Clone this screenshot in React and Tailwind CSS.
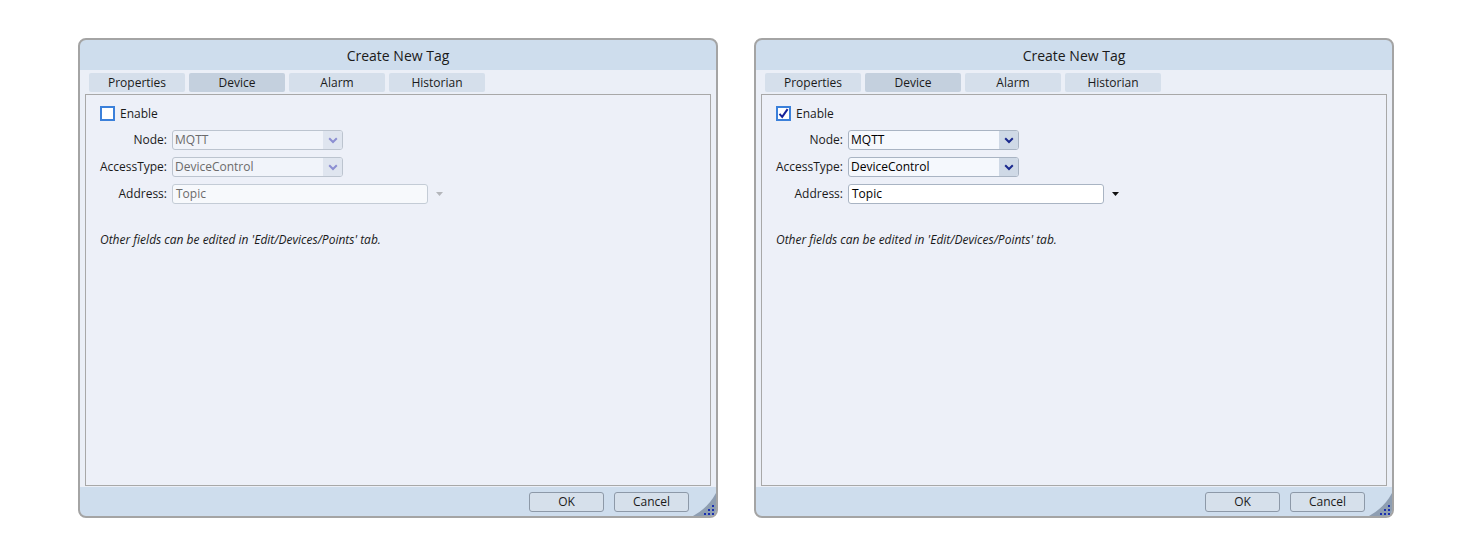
import React from "react";

const FONT = { fontFamily: '"Segoe UI", "Open Sans", "Noto Sans", sans-serif' };

function Chevron({ enabled }) {
  return (
    <svg width="10" height="7" viewBox="0 0 10 7">
      <path
        d="M1.2 1.3 L5 5 L8.8 1.3"
        fill="none"
        stroke={enabled ? "#1b2a8e" : "#8c8fd2"}
        strokeWidth="2"
      />
    </svg>
  );
}

function Select({ value, enabled }) {
  return (
    <div
      className={`flex h-[20px] w-[171px] items-stretch rounded-[3px] border ${
        enabled ? "border-[#a9b4c3] bg-[#f5f8fd] text-black" : "border-[#bcc4cf] bg-[#f1f4fa] text-[#6b6b6b]"
      }`}
    >
      <div className="flex flex-1 items-center pl-[2px] text-[12px] leading-none">{value}</div>
      <div
        className={`flex w-[19px] items-center justify-center rounded-r-[2px] ${
          enabled ? "bg-[#cfd9e6]" : "bg-[#dfe5ef]"
        }`}
      >
        <Chevron enabled={enabled} />
      </div>
    </div>
  );
}

function Row({ label, children }) {
  return (
    <div className="flex h-[20px] items-center">
      <div className="w-[86px] pr-[5px] text-right text-[12px] leading-none text-[#1a1a1a]">{label}</div>
      {children}
    </div>
  );
}

function Checkbox({ checked }) {
  return (
    <div className="flex h-[15px] w-[15px] items-center justify-center border-2 border-[#3b80da] bg-white">
      {checked && (
        <svg width="11" height="11" viewBox="0 0 11 11">
          <path d="M1.5 5.8 L4.2 8.8 L9.6 1.2" fill="none" stroke="#17239a" strokeWidth="2" />
        </svg>
      )}
    </div>
  );
}

function Grip() {
  const dots = [
    [20, 13],
    [16, 17],
    [20, 17],
    [12, 21],
    [16, 21],
    [20, 21],
  ];
  return (
    <svg className="absolute bottom-0 right-0" width="24" height="24" viewBox="0 0 24 24">
      <path d="M24 1 L24 24 L1 24 Q16 16 24 1 Z" fill="#8e9eb2" />
      {dots.map(([x, y], i) => (
        <rect key={i} x={x} y={y} width="2" height="2" fill="#1a2fb0" />
      ))}
    </svg>
  );
}

function Dialog({ enabled }) {
  const tabs = ["Properties", "Device", "Alarm", "Historian"];
  return (
    <div
      className="flex h-[480px] w-[640px] flex-col overflow-hidden rounded-[8px] border-2 border-[#a4a4a4] bg-[#cedded]"
      style={FONT}
    >
      <div className="flex h-[30px] items-center justify-center text-[14px] text-[#1a1a1a]">Create New Tag</div>
      <div className="flex flex-1 flex-col bg-[#ebeff7] px-[5px] pb-[1px]">
        <div className="flex h-[24px] gap-[4px] pl-[4px] pt-[3px]">
          {tabs.map((t) => (
            <div
              key={t}
              className={`flex h-[19px] w-[96px] items-center justify-center rounded-[2px] text-[12px] leading-none text-[#1a1a1a] ${
                t === "Device" ? "bg-[#c4d0de]" : "bg-[#d5dfeb]"
              }`}
            >
              {t}
            </div>
          ))}
        </div>
        <div className="flex flex-1 flex-col border border-[#a8a8a8] bg-[#edf0f8] pt-[10px]">
          <div className="flex h-[17px] items-center gap-[5px] pl-[14px]">
            <Checkbox checked={enabled} />
            <span className="text-[12px] leading-none text-[#1a1a1a]">Enable</span>
          </div>
          <div className="mt-[8px] flex flex-col gap-[7px]">
            <Row label="Node:">
              <Select value="MQTT" enabled={enabled} />
            </Row>
            <Row label="AccessType:">
              <Select value="DeviceControl" enabled={enabled} />
            </Row>
            <Row label="Address:">
              <div
                className={`flex h-[20px] w-[256px] items-center rounded-[3px] border pl-[3px] text-[12px] leading-none ${
                  enabled ? "border-[#a9b4c3] bg-white text-black" : "border-[#c4ccd6] bg-[#f7f9fc] text-[#6b6b6b]"
                }`}
              >
                Topic
              </div>
              <div className="ml-[5px] flex w-[12px] items-center justify-center">
                <svg width="7" height="4" viewBox="0 0 7 4">
                  <path d="M0 0 L7 0 L3.5 4 Z" fill={enabled ? "#111" : "#b4b6bb"} />
                </svg>
              </div>
            </Row>
          </div>
          <div className="mt-[30px] pl-[14px] text-[12px] italic leading-none text-[#1a1a1a]">
            Other fields can be edited in 'Edit/Devices/Points' tab.
          </div>
        </div>
      </div>
      <div className="relative flex h-[29px] items-center justify-end gap-[10px] pr-[27px]">
        {["OK", "Cancel"].map((b) => (
          <div
            key={b}
            className="flex h-[20px] w-[75px] items-center justify-center rounded-[3px] border border-[#8d99a8] bg-[#d6e0eb] text-[12px] leading-none text-[#1a1a1a]"
          >
            {b}
          </div>
        ))}
        <Grip />
      </div>
    </div>
  );
}

export default function App() {
  return (
    <div className="flex h-[556px] w-[1472px] items-center justify-center gap-[36px] bg-white">
      <Dialog enabled={false} />
      <Dialog enabled={true} />
    </div>
  );
}
